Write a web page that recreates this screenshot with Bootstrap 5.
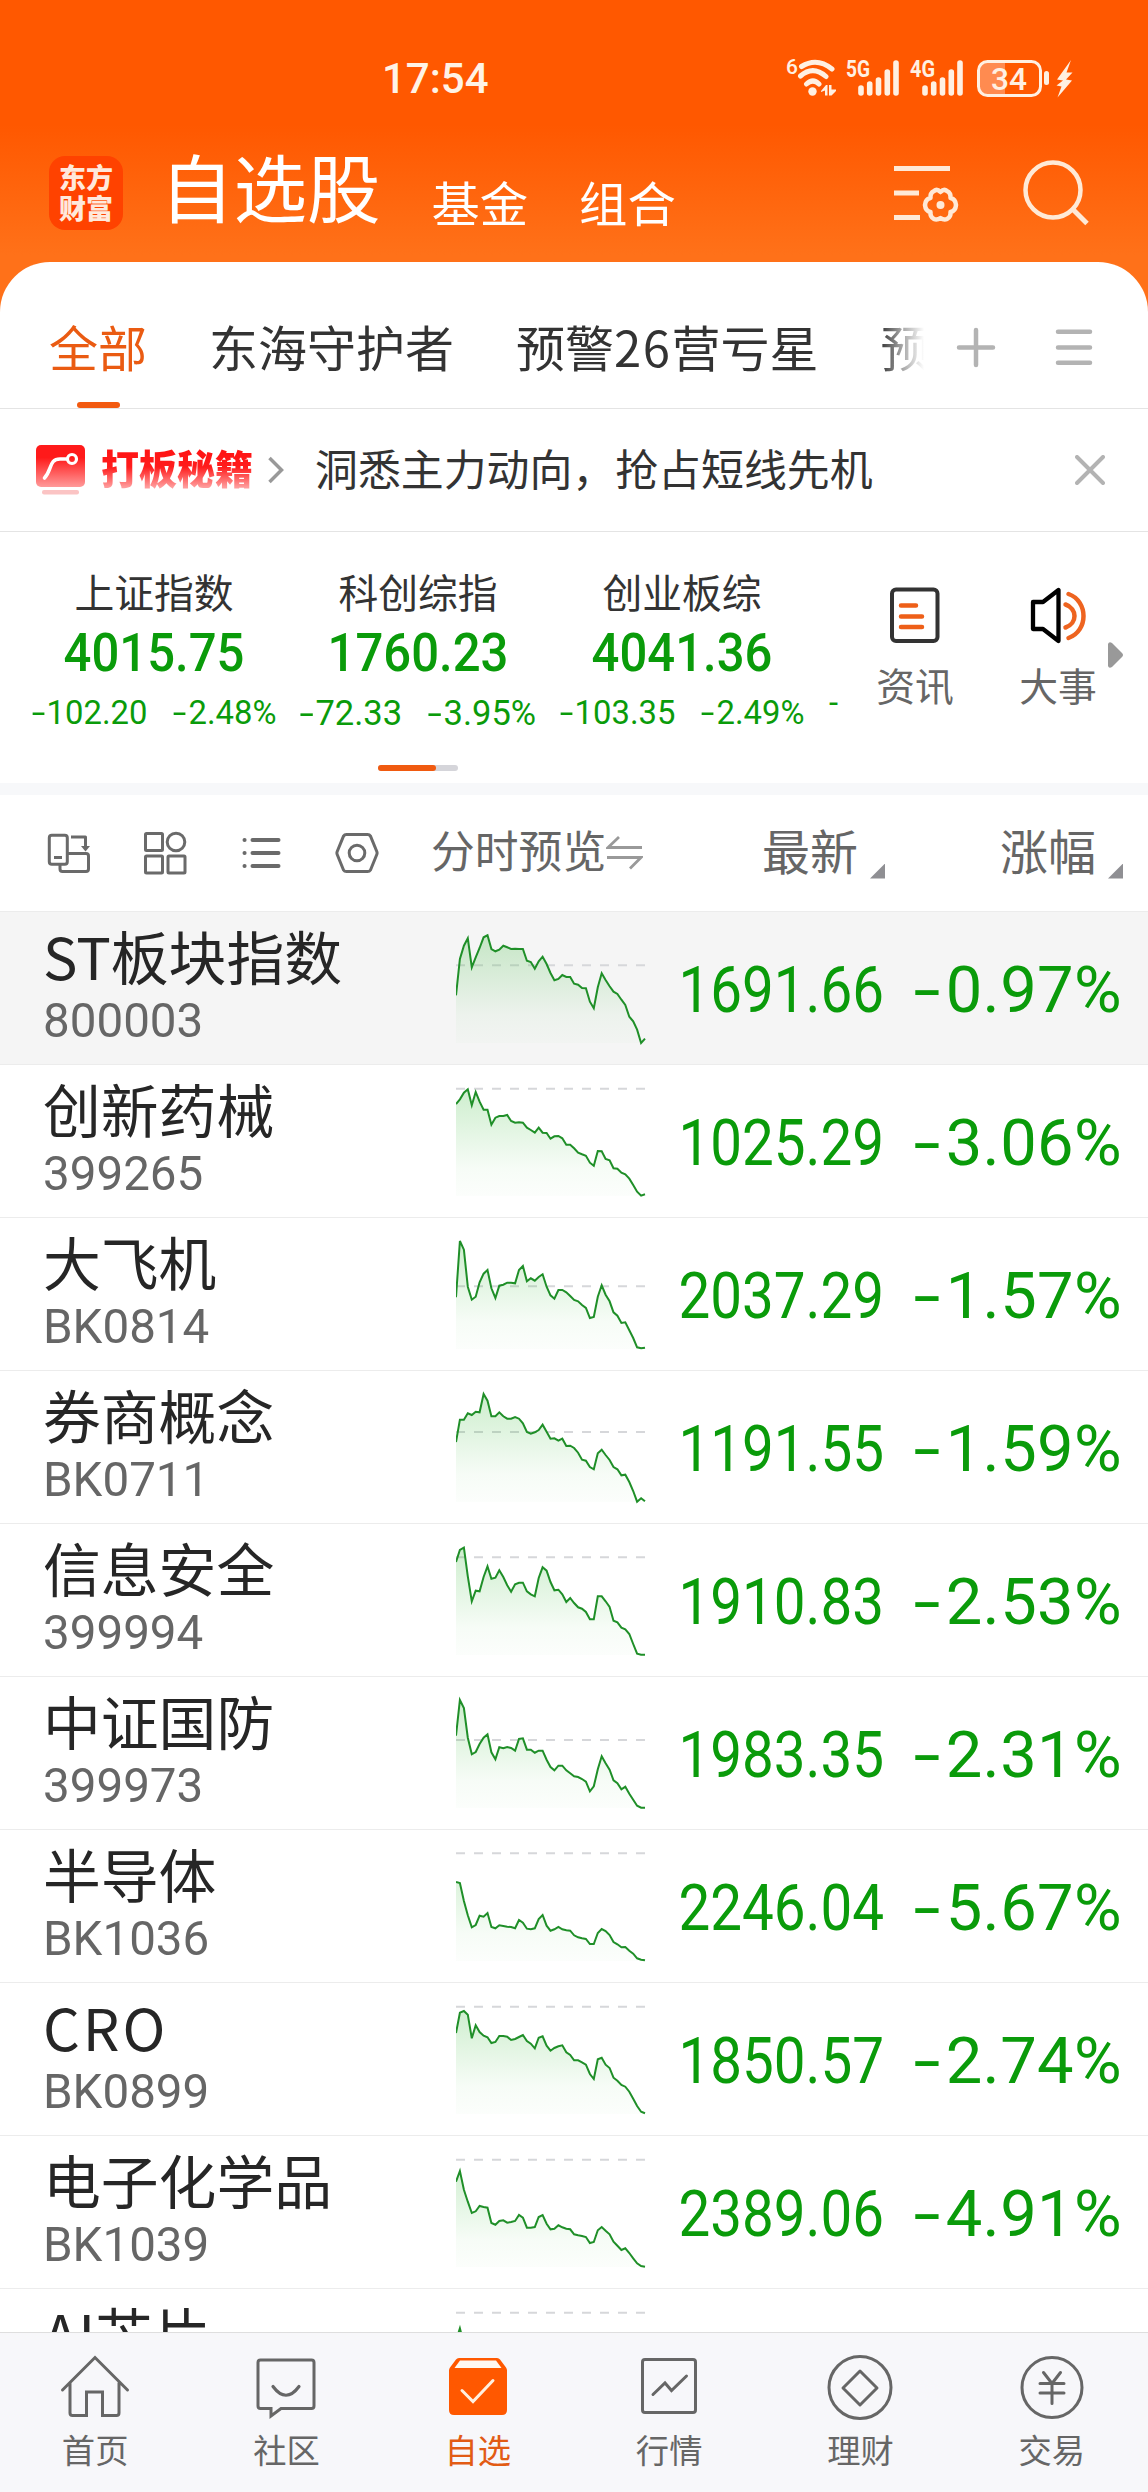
<!DOCTYPE html>
<html lang="zh-CN">
<head>
<meta charset="utf-8">
<meta name="viewport" content="width=device-width, initial-scale=1">
<title>自选股</title>
<link href="https://cdn.jsdelivr.net/npm/bootstrap@5.3.0/dist/css/bootstrap.min.css" rel="stylesheet">
<style>
  :root { --brand:#ff5800; --accent:#ea5b12; --down:#0a9b0a; --ink:#333; --mute:#666; }
  html, body { height:2492px; overflow:hidden; }
  body { font-family:"Noto Sans CJK SC", sans-serif; color:var(--ink); background:#fff; width:1148px; white-space:nowrap; }
  svg { display:block; flex:none; }
  .din { font-family:Roboto, sans-serif; }
  .hero { height:340px; background:linear-gradient(#ff5800 0, #ff5800 125px, #ff7119 255px, #ff7119 340px); color:#fff; }
  .status-line { height:98px; padding:57px 73px 0 382px; }
  .status-line svg { margin-top:-1px; }
  .clock { font-size:42px; line-height:44px; font-weight:500; color:#fff3e6; }
  .title-line { height:164px; padding:0 58px 0 49px; }
  .logo-tile { width:74px; height:74px; margin-top:58px; border-radius:16px; background:#ff4200; font-size:27px; font-weight:900; line-height:31px; padding-top:5px; color:#ffe9dc; text-align:center; }
  .h-main { font-size:73.5px; line-height:80px; margin:47px 0 0 37px; }
  .h-sub { font-size:48.3px; line-height:60px; margin:73px 0 0 51px; }
  .sheet { margin-top:-78px; height:2230px; border-radius:50px 50px 0 0; background:#fff; overflow:hidden; }
  .tabs-line { height:147px; padding-left:49px; border-bottom:1px solid #e4e4e4; }
  .tab-item { font-size:49px; line-height:60px; margin-top:54px; margin-right:62px; position:relative; }
  .tab-item.active { color:var(--accent); }
  .tab-item.active::after { content:""; position:absolute; left:28px; top:86px; width:43px; height:6px; border-radius:3px; background:#f25a10; }
  .tab-digits { letter-spacing:1.5px; }
  .tab-cut { width:48px; overflow:hidden; margin-right:0; background:linear-gradient(90deg,#333 0,#999 40%,#fff 92%); -webkit-background-clip:text; background-clip:text; color:transparent; }
  .promo { height:123px; padding:0 43px 0 36px; border-bottom:1px solid #e4e4e4; }
  .promo-tag { font-size:38px; font-weight:900; line-height:50px; margin:-6px 0 0 15px; width:152px; background:linear-gradient(#ff1414 20%,#ff1c1c 50%,#ff9c9c 88%); -webkit-background-clip:text; background-clip:text; color:transparent; transform:scaleY(1.06); }
  .promo-copy { font-size:42.9px; line-height:50px; margin:-7px 0 0 31px; }
  .indices { height:252px; }
  .idx-strip { width:840px; padding-left:22px; overflow:hidden; }
  .idx-cell { width:264px; flex:none; text-align:center; padding-top:34px; }
  .idx-name { font-size:39.8px; line-height:50px; }
  .idx-val { font-size:53px; line-height:60px; font-weight:500; color:var(--down); margin-top:7px; transform:scaleX(.925); }
  .idx-chg { font-size:32.8px; line-height:40px; color:var(--down); margin-top:10px; gap:26px; }
  .idx-chg.wide-chg { font-size:34.5px; }
  .dash { display:inline-block; transform:scaleX(1.5); }
  .idx-chg .dash { margin:0 4px 0 2px; }
  .idx-next { padding:141px 0 0 15px; }
  .short { width:80px; text-align:center; font-size:38.8px; line-height:50px; color:var(--mute); }
  .short svg { margin-top:55px; }
  .short span { margin-top:15px; }
  .more-arrow { margin:110px 0 0 10px; }
  .pager { height:6px; width:80px; border-radius:3px; background:#d5d5da; margin:-19px 0 0 378px; }
  .pager-on { height:6px; width:58px; border-radius:3px; background:#f05a10; }
  .gap-band { height:12px; background:#f7f8fa; margin-top:12px; }
  .cols-line { height:117px; color:var(--mute); border-bottom:1px solid #ececec; padding:0 25px 0 47px; }
  .col-t { font-size:48px; line-height:60px; margin-top:-8px; }
  .col-preview { font-size:43.8px; margin-left:52px; }
  .col-last { margin-left:115px; }
  .tri { width:15px; height:15px; background:#8f8f93; clip-path:polygon(100% 0,100% 100%,0 100%); margin:36px 0 0 12px; }
  .quote { height:153px; border-bottom:1px solid #ececec; padding-left:43px; }
  .quote.picked { background:#f5f5f5; }
  .q-id { width:413px; padding-top:8px; }
  .q-name { font-size:57.8px; line-height:70px; color:#262626; }
  .q-latin { letter-spacing:3px; }
  .q-code { font-size:49px; line-height:50px; color:var(--mute); transform:scaleX(.97); transform-origin:left; margin-top:6px; }
  .q-price { width:238px; text-align:right; font-size:65px; line-height:78px; margin-top:39px; color:var(--down); transform:scaleX(.87); transform-origin:right; }
  .q-pct { width:238px; text-align:right; font-size:65px; line-height:78px; margin-top:39px; color:var(--down); letter-spacing:.4px; }
  .q-pct .dash { margin-right:9px; }
  .dock { position:fixed; left:0; top:2332px; width:1148px; height:160px; background:#f7f7fa; border-top:1px solid #dedede; color:var(--mute); }
  .dock-item { font-size:33.3px; line-height:40px; padding-right:1px; }
  .dock-item span { margin-top:-1px; }
  .dock-item.active { color:#e25b14; }
</style>
</head>
<body>
<header class="hero">
  <div class="status-line d-flex justify-content-between">
    <span class="clock din">17:54</span>
    <svg width="290" height="42" viewBox="785 56 290 42" fill="#fff0e2" class="din">
      <text x="786" y="74" font-size="21" font-weight="500" textLength="11">6</text>
      <g fill="none" stroke="#fff0e2" stroke-width="5" stroke-linecap="round">
        <path d="M801.500 66.500Q817 57 832 69M800.500 76Q813 65 826 76.500M806.500 84Q813 78 819 84"/>
      </g>
      <circle cx="812.500" cy="91.500" r="4.200"/>
      <path d="M821 92v-1l5-6h1.500v10.500H825v-5zM829 85h2.500v4.500l4.500 0v1.500l-4.500 4.500H829z"/>
      <text x="846" y="77" font-size="23" font-weight="700" textLength="24" lengthAdjust="spacingAndGlyphs">5G</text>
      <text x="910" y="77" font-size="23" font-weight="700" textLength="25" lengthAdjust="spacingAndGlyphs">4G</text>
      <g stroke="#fff0e2" stroke-width="5.600" stroke-linecap="round">
        <path d="M861 88v5M869.700 84v9M878.500 80v13M887.300 72v21M896 63v30M925 88v5M933.700 84v9M942.500 80v13M951.300 72v21M960 63v30"/>
      </g>
      <path d="M985 62h20v32h-20q-6 0-6-7V69q0-7 6-7z" fill="#ff8b50"/>
      <rect x="978.500" y="61.500" width="62" height="34" rx="9" fill="none" stroke="#fff0e2" stroke-width="3"/>
      <rect x="1044" y="71" width="5" height="14" rx="2.500"/>
      <text x="991" y="90" font-size="32" font-weight="500" textLength="36" lengthAdjust="spacingAndGlyphs">34</text>
      <path d="M1071 60l-14 19.500 6 1-6.500 5 5 1-4 11 14.500-17-6-1 6.500-7h-6z"/>
    </svg>
  </div>
  <div class="title-line d-flex">
    <div class="logo-tile">东方<br>财富</div>
    <div class="h-main">自选股</div>
    <div class="h-sub">基金</div>
    <div class="h-sub">组合</div>
    <svg class="ms-auto mt-5" width="198" height="90" viewBox="892 146 198 90" fill="none" stroke="#ffe9d6" stroke-width="5">
      <path d="M894 168.500h56M894 193h25M894 217.500h26"/>
      <path stroke-width="4.500" stroke-linejoin="round" d="M934 191q3-2.500 6.500 1 3.500-3.500 6.500-1 4 2 3.500 7 5 1 5.500 7-.5 6-5.500 7 .5 5-3.500 7-3 1.500-6.500-1-3.500 2.500-6.500 1-4-2-3.500-7-5-1-5.500-7 .5-6 5.500-7-.5-5 3.500-7z"/>
      <circle cx="940.500" cy="205" r="4" fill="#ffe9d6" stroke="none"/>
      <circle cx="1053" cy="190" r="27.500" stroke-width="4.500"/>
      <path d="M1072 208.500l15 15" stroke-width="5"/>
    </svg>
  </div>
</header>

<main class="sheet">
  <nav class="tabs-line d-flex">
    <div class="tab-item active">全部</div>
    <div class="tab-item">东海守护者</div>
    <div class="tab-item">预警<span class="tab-digits">26</span>营亏星</div>
    <div class="tab-item tab-cut">预</div>
    <svg class="ms-auto" width="193" height="146" viewBox="955 262 193 146" stroke="#b3b3b3" stroke-width="4.500" stroke-linecap="round">
      <path d="M959 347.500h34M976 330v35M1058 331.700h32M1058 347.500h32M1058 362.700h32"/>
    </svg>
  </nav>

  <section class="promo d-flex align-items-center">
    <svg width="50" height="50" viewBox="36 445 50 50">
      <defs><linearGradient id="pg" x1="0" y1="0" x2="0" y2="1"><stop offset=".3" stop-color="#ff1a1a"/><stop offset="1" stop-color="#ff9a9a"/></linearGradient></defs>
      <rect x="36" y="445" width="49" height="42" rx="5" fill="url(#pg)"/>
      <rect x="42" y="490" width="37" height="4.500" rx="2" fill="#fbc4c4"/>
      <path d="M44.500 478C52 470 49 459 60 459h7" fill="none" stroke="#fff" stroke-width="3.600" stroke-linecap="round"/>
      <circle cx="72" cy="459" r="4.500" fill="none" stroke="#fff" stroke-width="3.200"/>
    </svg>
    <span class="promo-tag">打板秘籍</span>
    <svg style="margin-left:15px" width="16" height="28" viewBox="0 0 16 28" fill="none" stroke="#999" stroke-width="3.500"><path d="M1.500 2l12 12-12 12"/></svg>
    <span class="promo-copy">洞悉主力动向，抢占短线先机</span>
    <svg class="ms-auto" width="30" height="30" viewBox="0 0 30 30" stroke="#b3b3b3" stroke-width="4" stroke-linecap="round"><path d="M2 2l26 26M28 2L2 28"/></svg>
  </section>

  <section class="indices d-flex">
    <div class="idx-strip d-flex">
      <div class="idx-cell"><div class="idx-name">上证指数</div><div class="idx-val din">4015.75</div><div class="idx-chg din d-flex justify-content-center"><span><span class="dash">-</span>102.20</span><span><span class="dash">-</span>2.48%</span></div></div>
      <div class="idx-cell"><div class="idx-name">科创综指</div><div class="idx-val din">1760.23</div><div class="idx-chg wide-chg din d-flex justify-content-center"><span><span class="dash">-</span>72.33</span><span><span class="dash">-</span>3.95%</span></div></div>
      <div class="idx-cell"><div class="idx-name">创业板综</div><div class="idx-val din">4041.36</div><div class="idx-chg din d-flex justify-content-center"><span><span class="dash">-</span>103.35</span><span><span class="dash">-</span>2.49%</span></div></div>
      <div class="idx-chg idx-next din flex-shrink-0 align-self-start">-</div>
    </div>
    <div class="short d-flex flex-column align-items-center" style="margin-left:35px">
      <svg width="51" height="57" viewBox="890 587 51 57" fill="none" stroke-linecap="round">
        <rect x="892" y="589.500" width="45.500" height="51.500" rx="4" stroke="#333" stroke-width="4"/>
        <path d="M901 605.500h15M901 616.500h21M901 627h21" stroke="#ee5f18" stroke-width="4.500"/>
      </svg>
      <span>资讯</span>
    </div>
    <div class="short d-flex flex-column align-items-center" style="margin-left:63px">
      <svg width="56" height="57" viewBox="1031 587 56 57" fill="none" stroke-linecap="round">
        <path d="M1034 602h10l15.500-12v51l-15.500-12h-10z" stroke="#000" stroke-width="4.300" stroke-linejoin="round"/>
        <path d="M1066.500 604.500c12 4 12 19 0 23M1069.500 594c20 7 20 37 0 44" stroke="#ee6420" stroke-width="4.500"/>
      </svg>
      <span>大事</span>
    </div>
    <svg class="more-arrow" width="15" height="26" viewBox="0 0 15 26"><path d="M0 2q1-3 4-1l10 10q2 2 0 4L4 25q-3 2-4-1z" fill="#999"/></svg>
  </section>
  <div class="pager"><div class="pager-on"></div></div>
  <div class="gap-band"></div>

  <div class="cols-line d-flex align-items-center">
    <svg width="332" height="44" viewBox="47 831 332 44" fill="none" stroke="#6a6a6a" stroke-width="3" stroke-linejoin="round">
      <rect x="49.300" y="835.300" width="18" height="29" rx="2.500"/><path d="M54 857.500h8M71 837h14.500v11M60 865v4q0 2.500 2.500 2.500H86q2.500 0 2.500-2.500v-13q0-2.500-2.500-2.500H68"/><path d="M81 846h9l-4.500 5.500z" fill="#6a6a6a" stroke="none"/>
      <rect x="145.500" y="833.500" width="17" height="17" rx="1"/><circle cx="176" cy="842" r="8.800"/><rect x="145.500" y="856" width="17" height="17" rx="1"/><rect x="168" y="856" width="17" height="17" rx="1"/>
      <path d="M252.500 840h26M252.500 853h26M252.500 866h26M244.500 840h.1M244.500 853h.1M244.500 866h.1" stroke-width="4" stroke-linecap="round"/>
      <path d="M346.500 834.500h21q2 0 3 1.600l6.300 15.400q.6 1.500 0 3L370.500 870q-1 1.600-3 1.600h-21q-2 0-3-1.600l-6.300-15.500q-.6-1.500 0-3l6.300-15.400q1-1.600 3-1.600z"/><circle cx="357" cy="853" r="7.800"/>
    </svg>
    <span class="col-t col-preview">分时预览</span>
    <svg width="37" height="36" viewBox="0 0 37 36" fill="none" stroke="#999" stroke-width="2.800"><path d="M36 12.500H2L13 2M1 22.500h34L24 33.500"/></svg>
    <span class="col-t ms-auto">最新</span><i class="tri"></i>
    <span class="col-t col-last">涨幅</span><i class="tri"></i>
  </div>
  <div id="quotes"></div>
</main>

<footer class="dock d-flex"></footer>

<script>
// One sample per time slot; values are thirds of a pixel measured from `top`.
const quotes = [
  ["ST板块指数","800003","1691.66","0.97%",34,194,[284,175,135,113,200,170,142,110,104,145,152,147,135,140,145,144,145,145,180,184,204,182,168,190,217,239,235,223,229,229,249,252,262,263,303,323,260,218,238,257,273,280,297,313,348,362,387,427,414]],
  ["创新药械","399265","1025.29","3.06%",493,564,[610,596,576,566,614,574,603,627,627,672,651,646,646,643,661,666,665,666,681,688,696,681,696,697,714,707,706,713,732,732,743,756,761,765,786,795,751,752,775,779,803,804,816,821,834,853,873,885,881]],
  ["大飞机","BK0814","2037.29","1.57%",952,1157,[1190,1021,1047,1158,1197,1188,1145,1119,1108,1163,1192,1155,1152,1146,1146,1148,1108,1096,1142,1133,1140,1129,1121,1158,1184,1194,1168,1168,1175,1186,1198,1202,1213,1222,1252,1249,1188,1154,1182,1202,1235,1245,1267,1265,1289,1312,1340,1343,1341]],
  ["券商概念","BK0711","1191.55","1.59%",1,184,[214,147,147,128,133,123,125,70,90,137,137,125,137,144,144,139,144,158,184,189,185,178,162,183,204,203,210,204,226,225,232,246,267,270,289,296,248,237,253,268,289,296,314,312,334,361,393,383,392]],
  ["信息安全","399994","1910.83","2.53%",460,560,[574,538,531,617,692,660,662,619,587,624,621,599,619,644,663,641,636,636,662,671,677,622,590,600,634,659,657,671,694,682,697,710,714,724,746,746,677,677,692,709,750,755,771,776,790,820,849,852,852]],
  ["中证国防","399973","1983.35","2.31%",919,1108,[1095,988,1012,1101,1151,1144,1120,1101,1091,1145,1166,1130,1133,1129,1132,1140,1105,1103,1137,1137,1146,1140,1140,1167,1189,1199,1185,1185,1199,1208,1217,1219,1225,1233,1262,1247,1196,1157,1178,1197,1229,1238,1256,1248,1269,1287,1305,1311,1311]],
  ["半导体","BK1036","2246.04","5.67%",-1,69,[155,158,212,255,291,284,256,259,248,290,294,285,287,289,290,294,269,277,295,297,294,266,254,286,301,297,290,297,300,301,315,321,324,326,341,341,308,296,302,314,335,342,351,350,361,370,384,388,390]],
  ["CRO","BK0899","1850.57","2.74%",457,528,[607,546,541,552,623,584,604,615,620,637,634,616,616,618,628,625,619,613,631,639,653,621,617,645,660,652,647,644,665,673,689,689,695,702,730,745,686,681,702,712,741,750,763,768,783,804,826,843,848]],
  ["电子化学品","BK1039","2389.06","4.91%",916,987,[1053,1021,1077,1113,1147,1142,1126,1129,1131,1177,1182,1171,1169,1176,1174,1171,1153,1161,1191,1191,1189,1159,1153,1179,1196,1194,1184,1190,1194,1196,1211,1214,1216,1219,1237,1234,1199,1189,1200,1211,1233,1245,1258,1253,1267,1283,1298,1306,1308]],
  ["AI芯片","","","",1375,1446,[1530,1493,1540,1570,1600]]
];
document.getElementById("quotes").innerHTML =
  '<svg width="0" height="0" class="position-absolute"><defs><linearGradient id="fade" gradientUnits="userSpaceOnUse" x1="0" y1="20" x2="0" y2="131"><stop offset="0" stop-color="#28b428" stop-opacity=".24"/><stop offset=".75" stop-color="#28b428" stop-opacity=".04"/><stop offset="1" stop-color="#28b428" stop-opacity=".015"/></linearGradient></defs></svg>' +
  quotes.map(([name, code, price, pct, top, ref, ys], i) => {
    const pts = ys.map((y, k) => (k * 3.9375).toFixed(1) + "," + ((y - top) / 3).toFixed(1)).join(" ");
    const end = ((ys.length - 1) * 3.9375).toFixed(1), ry = ((ref - top) / 3).toFixed(1);
    const label = name === "CRO" ? '<span class="q-latin">CRO</span>' : name;
    return `<div class="quote d-flex${i ? "" : " picked"}">
      <div class="q-id"><div class="q-name">${label}</div><div class="q-code din">${code}</div></div>
      <svg width="190" height="152" viewBox="0 0 190 152">
        <path d="M0 ${ry}H189" stroke="#d6d7da" stroke-width="2" stroke-dasharray="9 9"/>
        <polygon points="0,131 ${pts} ${end},131" fill="url(#fade)"/>
        <polyline points="${pts}" fill="none" stroke="#1f8f28" stroke-width="2"/>
      </svg>
      <div class="q-price din">${price}</div>
      <div class="q-pct din">${pct && '<span class="dash">-</span>' + pct}</div>
    </div>`;
  }).join("");

const dock = [
  ["首页", '<path d="M-32.500 32L0 -.500 32.500 32M-25 25v30q0 2.500 2.500 2.500h14V34h16v23.500h14q2.500 0 2.500-2.500V25"/>'],
  ["社区", '<path d="M-25.500 2h51q2.500 0 2.500 2.500v43.500q0 2.500-2.500 2.500H-5L-15 58v-7.500h-10.500q-2.500 0-2.500-2.500V4.500q0-2.500 2.500-2.500z"/><path stroke-width="3.200" d="M-13 28.500Q0 46 13 28.500"/>'],
  ["自选", '<path d="M-19 0h38q2 0 3 1.500l6 8q1 1.500 1 3V52q0 5-5 5h-48q-5 0-5-5V12.500q0-1.500 1-3l6-8Q-21 0-19 0z" fill="#ff5800" stroke="none"/><path d="M-18 2.500h36l5.500 7.500h-47z" fill="#fff8f2" stroke="none"/><path d="M-16 32.500L-5 43.500 15 22.500" stroke="#fff0e0" stroke-width="3"/>'],
  ["行情", '<rect x="-26.500" y="1.500" width="53" height="53" rx="2.500"/><path d="M-16 36.500L-4 25l6.500 7.500L17.500 18" />'],
  ["理财", '<circle cx="0" cy="29.500" r="31"/><path d="M0 13l17 17L0 47l-17-17z" stroke-linejoin="round"/>'],
  ["交易", '<circle cx="0" cy="29.500" r="30"/><path d="M-8.500 14.500L0 25.500l8.500-11M0 25.500v20M-12 25.500h24M-12 35h24"/>']
];
document.querySelector(".dock").innerHTML = dock.map(([t, p], i) =>
  `<div class="dock-item col-2 d-flex flex-column align-items-center${i === 2 ? " active" : ""}">
     <svg width="70" height="97" viewBox="-35 -25 70 97" fill="none" stroke="#666" stroke-width="3" stroke-linecap="round">${p}</svg><span>${t}</span></div>`).join("");
</script>
<script src="https://cdn.jsdelivr.net/npm/bootstrap@5.3.0/dist/js/bootstrap.bundle.min.js"></script>
</body>
</html>
